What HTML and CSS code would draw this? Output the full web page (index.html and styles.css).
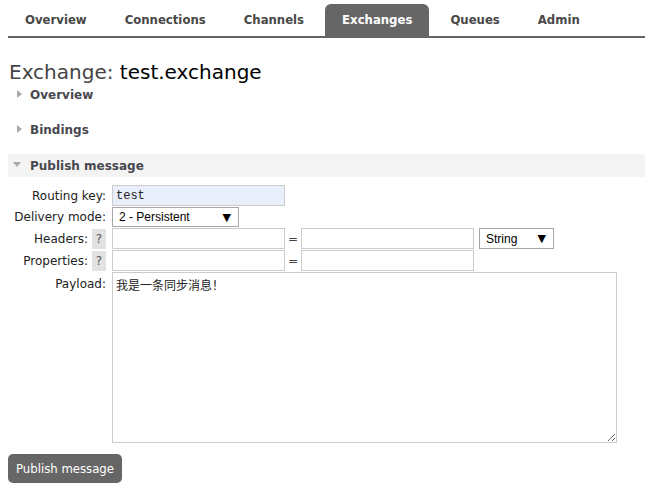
FILE: index.html
```html
<!DOCTYPE html>
<html>
<head>
<meta charset="utf-8">
<link rel="stylesheet" href="styles.css">
</head>
<body>
<nav class="menu">
  <ul class="tabs">
    <li class="tab">Overview</li>
    <li class="tab">Connections</li>
    <li class="tab">Channels</li>
    <li class="tab active">Exchanges</li>
    <li class="tab">Queues</li>
    <li class="tab">Admin</li>
  </ul>
</nav>
<h1 class="title"><span class="title-label">Exchange:</span> <span class="title-name">test.exchange</span></h1>

<section class="section">
  <div class="section-head"><span class="arrow"><span class="tri-right"></span></span><span class="head-text">Overview</span></div>
</section>
<section class="section">
  <div class="section-head"><span class="arrow"><span class="tri-right"></span></span><span class="head-text">Bindings</span></div>
</section>
<section class="section open">
  <div class="section-head shaded"><span class="arrow"><span class="tri-down"></span></span><span class="head-text">Publish message</span></div>
  <div class="form">
    <div class="row">
      <div class="label">Routing key:</div>
      <div class="fields"><input class="input mono filled" value="test"></div>
    </div>
    <div class="row">
      <div class="label">Delivery mode:</div>
      <div class="fields"><div class="select select-mode"><span>2 - Persistent</span><span class="caret">▼</span></div></div>
    </div>
    <div class="row">
      <div class="label">Headers: <span class="help">?</span></div>
      <div class="fields"><input class="input"><span class="eq">=</span><input class="input"><div class="select select-type"><span>String</span><span class="caret">▼</span></div></div>
    </div>
    <div class="row">
      <div class="label">Properties: <span class="help">?</span></div>
      <div class="fields"><input class="input"><span class="eq">=</span><input class="input"></div>
    </div>
    <div class="row row-top">
      <div class="label label-top">Payload:</div>
      <div class="fields"><textarea class="payload">我是一条同步消息！</textarea></div>
    </div>
  </div>
  <button class="btn">Publish message</button>
</section>
</body>
</html>
```
FILE: styles.css
```css
html, body {
  background: #fff;
}
body {
  margin: 0 0 0 8px;
  font-family: "DejaVu Sans", Verdana, sans-serif;
  font-size: 12px;
  color: #222;
}
.menu {
  padding-top: 4px;
}
.tabs {
  list-style: none;
  margin: 0;
  padding: 0;
  display: flex;
  gap: 4px;
  border-bottom: 2px solid #666;
}
.tab {
  font-family: "DejaVu Sans Condensed", "DejaVu Sans", sans-serif;
  font-stretch: condensed;
  font-weight: bold;
  font-size: 13px;
  line-height: 16px;
  padding: 8px 17px;
  color: #484848;
  border-radius: 6px 6px 0 0;
}
.tab.active {
  background: #666;
  color: #fff;
}
.title {
  margin: 22px 0 0 1px;
  font-size: 20px;
  font-weight: normal;
  line-height: 24px;
}
.title-label {
  color: #444;
}
.title-name {
  color: #000;
}
.section {
  margin-bottom: 13px;
}
.section-head {
  display: flex;
  align-items: center;
  height: 22px;
  padding-left: 5px;
  font-weight: bold;
  font-size: 12px;
  color: #484850;
}
.section-head.shaded {
  background: #f4f4f4;
  height: 23px;
}
.arrow {
  width: 17px;
  display: flex;
  align-items: center;
}
.tri-right {
  margin-left: 4px;
  width: 0;
  height: 0;
  border-top: 4px solid transparent;
  border-bottom: 4px solid transparent;
  border-left: 5px solid #aaa;
  margin-top: -3px;
}
.tri-down {
  width: 0;
  height: 0;
  border-left: 4px solid transparent;
  border-right: 4px solid transparent;
  border-top: 5px solid #aaa;
  margin-top: -3px;
}
.form {
  margin-top: 8px;
}
.row {
  display: flex;
  align-items: center;
  margin-bottom: 1px;
}
.row-top {
  align-items: flex-start;
}
.label {
  width: 98px;
  display: flex;
  justify-content: flex-end;
  align-items: center;
  gap: 4px;
  white-space: nowrap;
  color: #222;
}
.label-top {
  padding-top: 5px;
}
.help {
  display: inline-block;
  width: 14px;
  height: 20px;
  line-height: 20px;
  text-align: center;
  background: #e2e2e2;
  color: #555;
  font-size: 12px;
}
.fields {
  margin-left: 6px;
  display: flex;
  align-items: center;
}
.input {
  box-sizing: border-box;
  width: 173px;
  height: 21px;
  border: 1px solid #ccc;
  margin: 0;
  padding: 1px 3px;
  background: #fff;
  font-family: "Liberation Mono", monospace;
  font-size: 12px;
  color: #222;
  outline: none;
}
.input.filled {
  background: #e8eefa;
}
.eq {
  width: 16px;
  text-align: center;
  color: #444;
}
.select {
  box-sizing: border-box;
  height: 20px;
  border: 1px solid #a6a6a6;
  display: flex;
  align-items: center;
  justify-content: space-between;
  padding: 0 7px 0 6px;
  font-family: "Liberation Sans", Arial, sans-serif;
  font-size: 12px;
  color: #000;
  background: #fff;
}
.select-mode {
  width: 127px;
}
.select-type {
  width: 75px;
  margin-left: 5px;
  height: 21px;
}
.caret {
  font-family: "DejaVu Sans", sans-serif;
  font-size: 11px;
  color: #000;
}
.payload {
  box-sizing: border-box;
  width: 505px;
  height: 171px;
  margin: 0;
  border: 1px solid #ccc;
  padding: 3px 3px;
  font-family: "Liberation Mono", "Noto Sans CJK SC", monospace;
  font-size: 12px;
  color: #222;
  resize: both;
  outline: none;
}
.btn {
  margin-top: 10px;
  height: 29px;
  padding: 0 8px;
  border: 0;
  border-radius: 5px;
  background: #666;
  color: #fff;
  font-family: "DejaVu Sans Condensed", "DejaVu Sans", sans-serif;
  font-stretch: condensed;
  font-size: 13px;
}
```
